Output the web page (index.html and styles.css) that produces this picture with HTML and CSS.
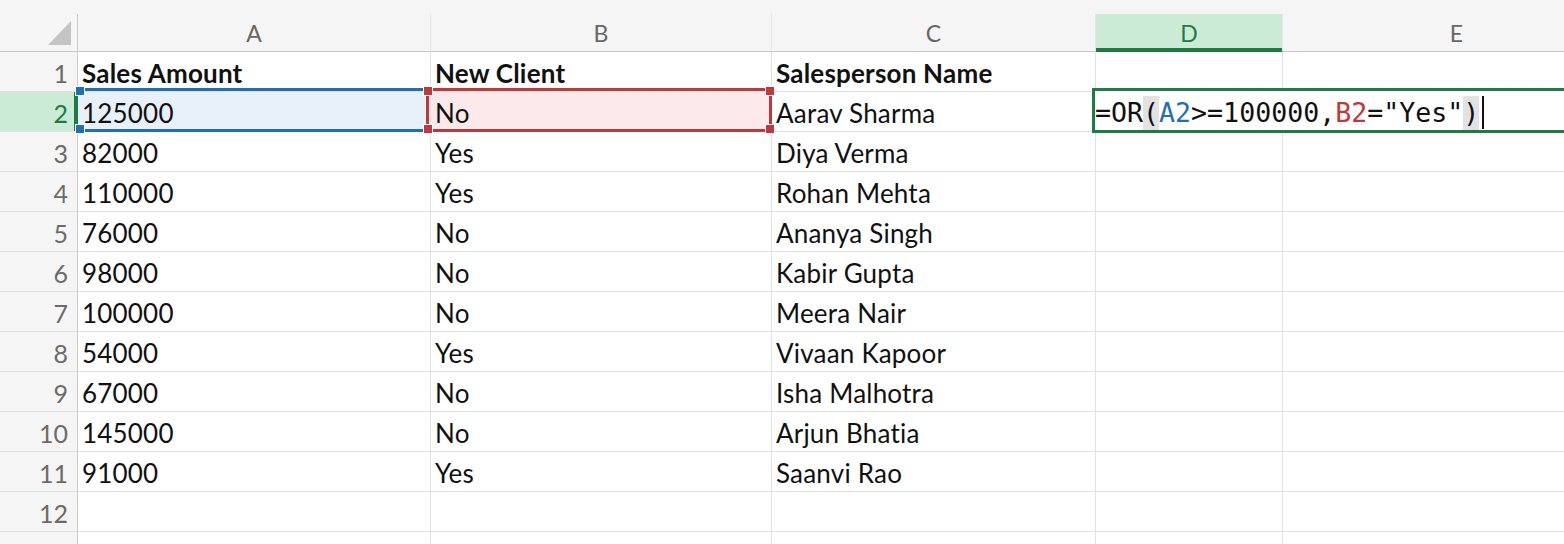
FILE: index.html
```html
<!DOCTYPE html>
<html>
<head>
<meta charset="utf-8">
<link rel="stylesheet" href="styles.css">
</head>
<body>
<div class="sheet">
  <div class="c corner"><div class="tri"></div></div>
  <div class="c ch">A</div>
  <div class="c ch">B</div>
  <div class="c ch">C</div>
  <div class="c ch sel">D</div>
  <div class="c ch">E</div>

  <div class="c rh">1</div><div class="c b">Sales Amount</div><div class="c b">New Client</div><div class="c b">Salesperson Name</div><div class="c"></div><div class="c"></div>
  <div class="c rh sel">2</div><div class="c ra">125000</div><div class="c rb">No</div><div class="c">Aarav Sharma</div><div class="c"></div><div class="c"></div>
  <div class="c rh">3</div><div class="c">82000</div><div class="c">Yes</div><div class="c">Diya Verma</div><div class="c"></div><div class="c"></div>
  <div class="c rh">4</div><div class="c">110000</div><div class="c">Yes</div><div class="c">Rohan Mehta</div><div class="c"></div><div class="c"></div>
  <div class="c rh">5</div><div class="c">76000</div><div class="c">No</div><div class="c">Ananya Singh</div><div class="c"></div><div class="c"></div>
  <div class="c rh">6</div><div class="c">98000</div><div class="c">No</div><div class="c">Kabir Gupta</div><div class="c"></div><div class="c"></div>
  <div class="c rh">7</div><div class="c">100000</div><div class="c">No</div><div class="c">Meera Nair</div><div class="c"></div><div class="c"></div>
  <div class="c rh">8</div><div class="c">54000</div><div class="c">Yes</div><div class="c">Vivaan Kapoor</div><div class="c"></div><div class="c"></div>
  <div class="c rh">9</div><div class="c">67000</div><div class="c">No</div><div class="c">Isha Malhotra</div><div class="c"></div><div class="c"></div>
  <div class="c rh">10</div><div class="c">145000</div><div class="c">No</div><div class="c">Arjun Bhatia</div><div class="c"></div><div class="c"></div>
  <div class="c rh">11</div><div class="c">91000</div><div class="c">Yes</div><div class="c">Saanvi Rao</div><div class="c"></div><div class="c"></div>
  <div class="c rh">12</div><div class="c"></div><div class="c"></div><div class="c"></div><div class="c"></div><div class="c"></div>
  <div class="c rh">13</div><div class="c"></div><div class="c"></div><div class="c"></div><div class="c"></div><div class="c"></div>

  <div class="range blue">
    <span class="h tl"></span><span class="h bl"></span>
  </div>
  <div class="range red">
    <span class="h tl"></span><span class="h tr"></span><span class="h bl"></span><span class="h br"></span>
  </div>
  <div class="edit">=OR<span class="par">(</span><span class="refa">A2</span>&gt;=100000,<span class="refb">B2</span>="Yes"<span class="par">)</span><span class="caret"></span></div>
</div>
</body>
</html>
```

FILE: styles.css
```css
html, body {
  margin: 0;
  height: 100%;
  overflow: hidden;
  background: #f5f5f5;
}
body {
  padding-top: 14px;
  box-sizing: border-box;
  font-family: "Lato", "Open Sans", sans-serif;
}
.sheet {
  position: relative;
  display: grid;
  grid-template-columns: 78px 353px 341px 324px 187px 348px;
  grid-template-rows: 38px;
  grid-auto-rows: 40px;
  background: #fff;
}
.c {
  box-sizing: border-box;
  border-right: 1px solid #e1e1e1;
  border-bottom: 1px solid #e1e1e1;
  display: flex;
  align-items: center;
  padding: 2px 0 0 4px;
  font-size: 26px;
  letter-spacing: 0.2px;
  color: #111;
  white-space: nowrap;
}
.b { font-weight: 700; }
.corner {
  background: #f5f5f5;
  border-right-color: #cdcdcd;
  border-bottom-color: #c8c8c8;
  justify-content: flex-end;
  align-items: flex-end;
  padding: 0 6px 6px 0;
}
.tri {
  width: 23px;
  height: 24px;
  background: #c4c4c4;
  clip-path: polygon(100% 0, 100% 100%, 0 100%);
}
.ch {
  background: #f5f5f5;
  justify-content: center;
  padding: 0;
  color: #676767;
  font-size: 23px;
  letter-spacing: 0;
  border-bottom-color: #c8c8c8;
  border-right-color: #e4e4e4;
}
.ch.sel {
  background: #cbebd7;
  color: #1e7b45;
  box-shadow: inset 0 -3px 0 #1e7b45;
  border-bottom-color: #1e7b45;
}
.rh {
  background: #f5f5f5;
  justify-content: flex-end;
  padding: 2px 9px 0 0;
  color: #6b6b6b;
  font-size: 25px;
  letter-spacing: 0;
  border-right-color: #cdcdcd;
}
.rh.sel {
  background: #cbebd7;
  color: #1e7b45;
  border-right-color: #1e7b45;
  box-shadow: inset -3px 0 0 #1e7b45;
}
.ra { background: #e8f0fa; }
.rb { background: #fce9e9; }

.range {
  position: absolute;
  top: 74px;
  height: 44px;
  box-sizing: border-box;
}
.blue {
  left: 78px;
  width: 352px;
  border-top: 3px solid #1f6fb8;
  border-bottom: 3px solid #1f6fb8;
}
.red {
  left: 426px;
  width: 346px;
  border: 3px solid #c1383c;
}
.h {
  position: absolute;
  width: 8px;
  height: 8px;
  border: 1px solid #fff;
}
.blue .h { background: #1f6fb8; }
.red .h { background: #c1383c; }
.blue .tl { left: -3px; top: -5px; }
.blue .bl { left: -3px; bottom: -5px; }
.red .tl { left: -6px; top: -5px; }
.red .tr { right: -6px; top: -5px; }
.red .bl { left: -6px; bottom: -5px; }
.red .br { right: -6px; bottom: -5px; }

.edit {
  position: absolute;
  left: 1092px;
  top: 74px;
  width: 520px;
  height: 45px;
  box-sizing: border-box;
  border: 3px solid #1e7b45;
  background: #fff;
  font-family: "DejaVu Sans Mono", "Liberation Mono", monospace;
  font-size: 26.6px;
  color: #111;
  white-space: nowrap;
  display: flex;
  align-items: center;
  padding-top: 4px;
}
.par {
  display: inline-block;
  background: #e2e2e2;
  height: 34px;
  line-height: 34px;
}
.refa { color: #1f6fb8; }
.refb { color: #c1383c; }
.caret {
  display: inline-block;
  width: 2px;
  height: 33px;
  background: #111;
  margin-left: 3px;
}
```
